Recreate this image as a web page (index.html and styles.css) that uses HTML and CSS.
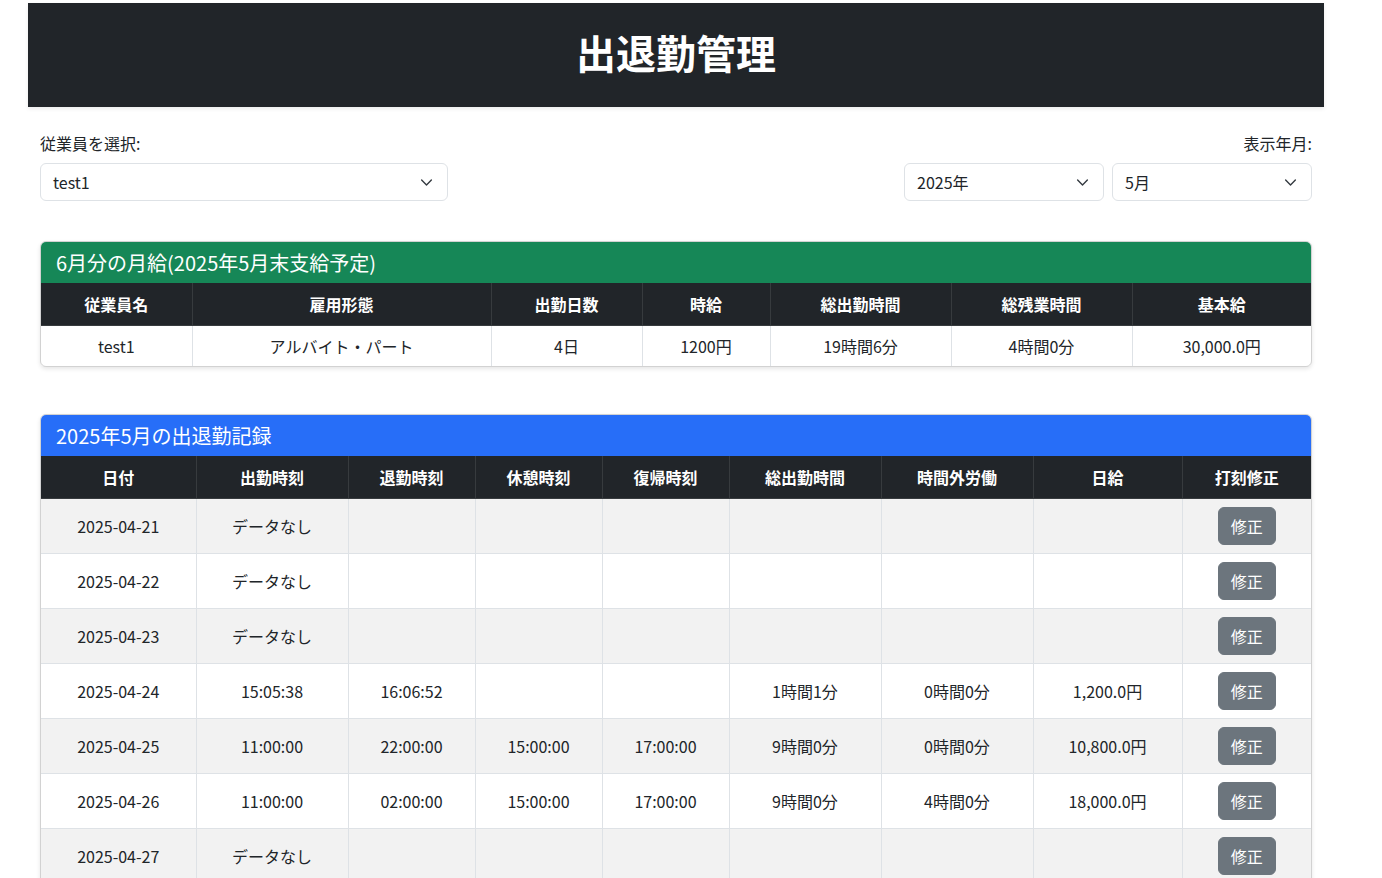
FILE: index.html
```html
<!DOCTYPE html>
<html lang="ja">
<head>
<meta charset="utf-8">
<title>出退勤管理</title>
<link rel="stylesheet" href="styles.css">
</head>
<body>
<div class="page">
  <header class="topbar">
    <h1>出退勤管理</h1>
  </header>
  <main class="content">
    <div class="filters">
      <div class="filter-left">
        <label class="form-label">従業員を選択:</label>
        <div class="select wide"><span>test1</span><svg viewBox="0 0 16 16"><path d="M2 5l6 6 6-6"/></svg></div>
      </div>
      <div class="filter-right">
        <label class="form-label">表示年月:</label>
        <div class="select-row">
          <div class="select narrow"><span>2025年</span><svg viewBox="0 0 16 16"><path d="M2 5l6 6 6-6"/></svg></div>
          <div class="select narrow"><span>5月</span><svg viewBox="0 0 16 16"><path d="M2 5l6 6 6-6"/></svg></div>
        </div>
      </div>
    </div>

    <section class="card salary">
      <div class="card-header green">6月分の月給(2025年5月末支給予定)</div>
      <table class="tbl">
        <colgroup>
          <col class="s1"><col class="s2"><col class="s3"><col class="s4"><col class="s5"><col class="s6"><col class="s7">
        </colgroup>
        <thead>
          <tr><th>従業員名</th><th>雇用形態</th><th>出勤日数</th><th>時給</th><th>総出勤時間</th><th>総残業時間</th><th>基本給</th></tr>
        </thead>
        <tbody>
          <tr><td>test1</td><td>アルバイト・パート</td><td>4日</td><td>1200円</td><td>19時間6分</td><td>4時間0分</td><td>30,000.0円</td></tr>
        </tbody>
      </table>
    </section>

    <section class="card records">
      <div class="card-header blue">2025年5月の出退勤記録</div>
      <table class="tbl striped">
        <colgroup>
          <col class="r1"><col class="r2"><col class="r3"><col class="r4"><col class="r5"><col class="r6"><col class="r7"><col class="r8"><col class="r9">
        </colgroup>
        <thead>
          <tr><th>日付</th><th>出勤時刻</th><th>退勤時刻</th><th>休憩時刻</th><th>復帰時刻</th><th>総出勤時間</th><th>時間外労働</th><th>日給</th><th>打刻修正</th></tr>
        </thead>
        <tbody>
          <tr><td>2025-04-21</td><td>データなし</td><td></td><td></td><td></td><td></td><td></td><td></td><td><button class="btn">修正</button></td></tr>
          <tr><td>2025-04-22</td><td>データなし</td><td></td><td></td><td></td><td></td><td></td><td></td><td><button class="btn">修正</button></td></tr>
          <tr><td>2025-04-23</td><td>データなし</td><td></td><td></td><td></td><td></td><td></td><td></td><td><button class="btn">修正</button></td></tr>
          <tr><td>2025-04-24</td><td>15:05:38</td><td>16:06:52</td><td></td><td></td><td>1時間1分</td><td>0時間0分</td><td>1,200.0円</td><td><button class="btn">修正</button></td></tr>
          <tr><td>2025-04-25</td><td>11:00:00</td><td>22:00:00</td><td>15:00:00</td><td>17:00:00</td><td>9時間0分</td><td>0時間0分</td><td>10,800.0円</td><td><button class="btn">修正</button></td></tr>
          <tr><td>2025-04-26</td><td>11:00:00</td><td>02:00:00</td><td>15:00:00</td><td>17:00:00</td><td>9時間0分</td><td>4時間0分</td><td>18,000.0円</td><td><button class="btn">修正</button></td></tr>
          <tr><td>2025-04-27</td><td>データなし</td><td></td><td></td><td></td><td></td><td></td><td></td><td><button class="btn">修正</button></td></tr>
        </tbody>
      </table>
    </section>
  </main>
</div>
</body>
</html>
```

FILE: styles.css
```css
* { box-sizing: border-box; }
html, body {
  margin: 0;
  padding: 0;
  background: #fff;
  font-family: "Noto Sans CJK JP", "Noto Sans", sans-serif;
  font-size: 16px;
  line-height: 24px;
  color: #212529;
}
.page {
  width: 1296px;
  margin-left: 28px;
  padding-top: 3px;
}
.topbar {
  background: #212529;
  height: 104px;
  padding-bottom: 7px;
  display: flex;
  align-items: center;
  justify-content: center;
  box-shadow: 0 2px 4px rgba(0,0,0,.08);
}
.topbar h1 {
  margin: 0;
  color: #fff;
  font-size: 40px;
  font-weight: 700;
  line-height: 48px;
}
.content {
  padding: 24px 12px 0 12px;
}
.filters {
  display: flex;
  justify-content: space-between;
  align-items: flex-start;
}
.form-label {
  display: block;
  margin-bottom: 8px;
  font-size: 16px;
  line-height: 24px;
}
.filter-right {
  display: flex;
  flex-direction: column;
  align-items: flex-end;
}
.select-row {
  display: flex;
  gap: 8px;
}
.select {
  height: 38px;
  border: 1px solid #dee2e6;
  border-radius: 6px;
  display: flex;
  align-items: center;
  justify-content: space-between;
  padding: 0 14px 0 12px;
  background: #fff;
}
.select svg {
  width: 13px;
  height: 13px;
  fill: none;
  stroke: #343a40;
  stroke-width: 1.7;
  stroke-linecap: round;
  stroke-linejoin: round;
}
.wide { width: 408px; }
.narrow { width: 200px; }
.card {
  width: 1272px;
  border: 1px solid rgba(0,0,0,.175);
  border-radius: 6px;
  overflow: hidden;
  box-shadow: 0 2px 4px rgba(0,0,0,.1);
}
.salary { margin-top: 40px; }
.records { margin-top: 47px; }
.card-header {
  height: 41px;
  padding: 0 15px;
  display: flex;
  align-items: center;
  color: #fff;
  font-size: 20px;
  line-height: 24px;
}
.green { background: #168757; }
.blue { background: #276ef8; }
.tbl {
  width: 100%;
  border-collapse: collapse;
  table-layout: fixed;
}
.tbl th {
  background: #212529;
  color: #fff;
  font-weight: 700;
  height: 42px;
  padding: 0 8px;
  text-align: center;
  border-left: 1px solid #373b3e;
  border-bottom: 1px solid #373b3e;
}
.tbl td {
  height: 41px;
  padding: 0 8px;
  text-align: center;
  border-left: 1px solid #dee2e6;
  border-bottom: 1px solid #dee2e6;
}
.tbl th:first-child, .tbl td:first-child { border-left: none; }
.tbl tbody tr:last-child td { border-bottom: none; }
.striped td { height: 55px; }
.striped tbody tr:nth-child(odd) td { background: #f2f2f2; }
.btn {
  font-family: inherit;
  font-size: 16px;
  line-height: 24px;
  color: #fff;
  background: #6c757d;
  border: 1px solid #6c757d;
  border-radius: 6px;
  padding: 6px 12px;
  cursor: pointer;
}
col.s1 { width: 151px; }
col.s2 { width: 299px; }
col.s3 { width: 151px; }
col.s4 { width: 128px; }
col.s5 { width: 181px; }
col.s6 { width: 181px; }
col.s7 { width: 179px; }
col.r1 { width: 155px; }
col.r2 { width: 152px; }
col.r3 { width: 127px; }
col.r4 { width: 127px; }
col.r5 { width: 127px; }
col.r6 { width: 152px; }
col.r7 { width: 152px; }
col.r8 { width: 149px; }
col.r9 { width: 129px; }
```
